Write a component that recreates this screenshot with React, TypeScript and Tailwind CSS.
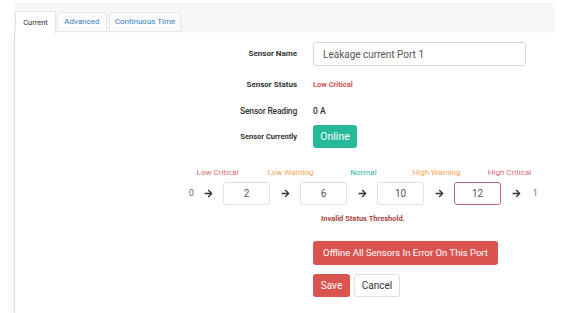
import React from 'react';

function Arrow() {
  return (
    <svg width="9" height="9" viewBox="0 0 448 512" className="shrink-0 fill-[#333]">
      <path d="M190.5 66.9l22.2-22.2c9.4-9.4 24.6-9.4 33.9 0L441 239c9.4 9.4 9.4 24.6 0 33.9L246.6 467.3c-9.4 9.4-24.6 9.4-33.9 0l-22.2-22.2c-9.5-9.5-9.3-25 .4-34.3L311.4 296H24c-13.3 0-24-10.7-24-24v-32c0-13.3 10.7-24 24-24h287.4L190.9 101.2c-9.8-9.3-10-24.8-.4-34.3z" />
    </svg>
  );
}

function Row({ label, labelClass = 'text-[8px] font-bold', children, className = '' }: { label: string; labelClass?: string; children: React.ReactNode; className?: string }) {
  return (
    <div className={`flex items-center ${className}`}>
      <div className={`w-[283px] pr-px text-right text-[#333] ${labelClass}`}>{label}</div>
      <div className="ml-[15px] flex items-center">{children}</div>
    </div>
  );
}

export default function App() {
  const levels = [
    { name: 'Low Critical', color: 'text-[#dc6b6b]' },
    { name: 'Low Warning', color: 'text-[#f0a44e]' },
    { name: 'Normal', color: 'text-[#26b99a]' },
    { name: 'High Warning', color: 'text-[#f0a44e]' },
    { name: 'High Critical', color: 'text-[#d8707a]' },
  ];
  const values = ['2', '6', '10', '12'];

  return (
    <div className="w-[562px] h-[313px] bg-white overflow-hidden" style={{ fontFamily: 'Roboto, "Liberation Sans", sans-serif' }}>
      {/* tab header band */}
      <div className="ml-[14px] mt-[3px] w-[540px] h-[29px] bg-[#f7f7f7] flex items-end pl-px shadow-[1px_0_2px_rgba(0,0,0,0.04)]">
        <div className="w-[41px] h-[22px] bg-white border border-b-0 border-[#e3e3e3] rounded-t-[2px] flex items-center justify-center text-[7.5px] text-[#333] -mb-px">Current</div>
        <div className="ml-px w-[50px] h-[20px] bg-[#fbfbfb] border border-[#e6e6e6] rounded-t-[2px] flex items-center justify-center text-[8px] text-[#3a7fc0]">Advanced</div>
        <div className="ml-[2px] w-[72px] h-[20px] bg-[#fbfbfb] border border-[#e6e6e6] rounded-t-[2px] flex items-center justify-center text-[8px] text-[#3a7fc0]">Continuous Time</div>
      </div>

      {/* panel */}
      <div className="ml-[14px] h-[281px] border-l border-[#dedede] shadow-[-4px_0_5px_rgba(0,0,0,0.03)] pt-[10px] flex flex-col">
        <Row label="Sensor Name">
          <div className="w-[213px] h-[24px] border border-[#d6d6d6] rounded-[3px] flex items-center pl-[9px] text-[10px] text-[#555]">Leakage current Port 1</div>
        </Row>
        <Row label="Sensor Status" className="mt-[12px] h-[14px]">
          <span className="text-[7.5px] font-bold text-[#d9534f]">Low Critical</span>
        </Row>
        <Row label="Sensor Reading" labelClass="text-[8.5px] font-medium tracking-[-0.2px]" className="mt-[12px] h-[14px]">
          <span className="text-[8.5px] font-medium text-[#333]">0 A</span>
        </Row>
        <Row label="Sensor Currently" labelClass="text-[7.5px] font-bold" className="mt-[7px]">
          <div className="w-[44px] h-[23px] rounded-[3px] bg-[#26b99a] text-white text-[10.5px] flex items-center justify-center">Online</div>
        </Row>

        {/* threshold labels */}
        <div className="mt-[19px] ml-[166px] flex h-[12px] items-center">
          {levels.map((l) => (
            <div key={l.name} className={`w-[73px] text-center text-[8px] ${l.color}`}>{l.name}</div>
          ))}
        </div>

        {/* threshold inputs */}
        <div className="mt-[3px] ml-[174px] flex items-center h-[23px] text-[10px] text-[#555]">
          <span className="w-[5px] text-[8.5px] text-[#666]">0</span>
          <div className="ml-[10px] mr-[10px]"><Arrow /></div>
          {values.map((v, i) => (
            <React.Fragment key={v}>
              <div className={`w-[47px] h-[23px] rounded-[3px] border flex items-center justify-center ${i === 3 ? 'border-[#b36a6a]' : 'border-[#e0e0e0]'}`}>{v}</div>
              <div className="ml-[11px] mr-[10px]"><Arrow /></div>
            </React.Fragment>
          ))}
          <span className="ml-[2px] text-[8.5px] text-[#666]">1</span>
        </div>

        <div className="mt-[8px] ml-[306px] text-[7.5px] font-bold text-[#a94442]">Invalid Status Threshold.</div>

        <div className="mt-[17px] ml-[298px] w-[185px] h-[24px] rounded-[3px] bg-[#d9534f] text-white text-[9.5px] flex items-center justify-center">Offline All Sensors In Error On This Port</div>

        <div className="mt-[9px] ml-[298px] flex gap-[4px]">
          <div className="w-[37px] h-[23px] rounded-[3px] bg-[#d9534f] text-white text-[10px] flex items-center justify-center">Save</div>
          <div className="w-[46px] h-[23px] rounded-[3px] border border-[#dedede] bg-white text-[#333] text-[10px] flex items-center justify-center">Cancel</div>
        </div>
      </div>
    </div>
  );
}
